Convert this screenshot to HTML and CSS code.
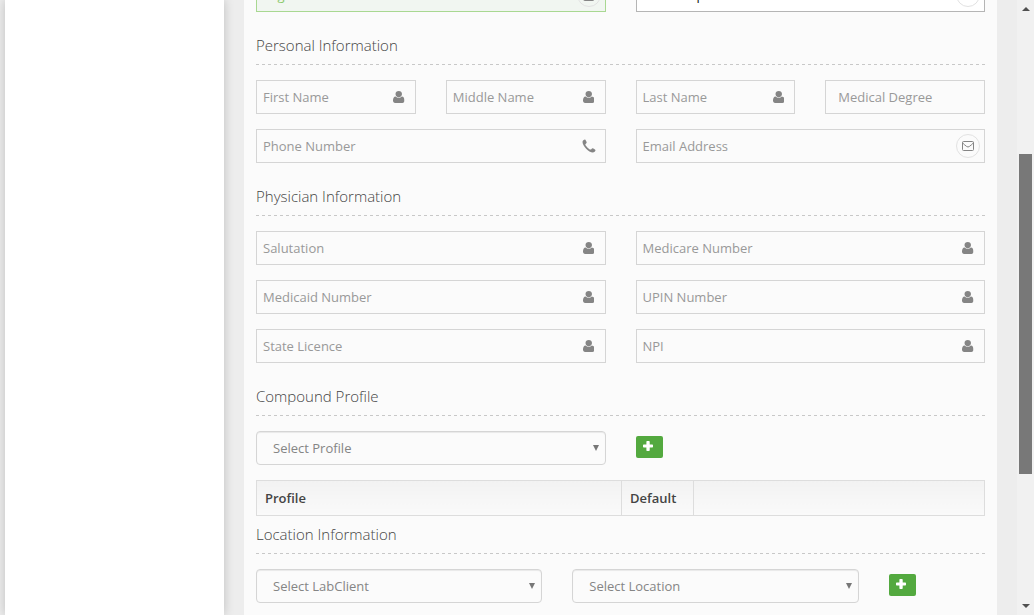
FILE: index.html
```
<!DOCTYPE html>
<html lang="en">
<head>
<meta charset="utf-8">
<title>Physician</title>
<link rel="stylesheet" href="styles.css">
</head>
<body>
<svg class="defs" aria-hidden="true">
  <symbol id="user" viewBox="0 0 11 12" preserveAspectRatio="none"><path d="M5.5 0C7.3 0 8.6 1.3 8.6 3.1S7.3 6.3 5.5 6.3 2.4 4.9 2.4 3.1 3.7 0 5.5 0ZM2.6 5.4C3.3 6.2 4.3 6.700 5.5 6.700S7.700 6.200 8.400 5.400C10.300 5.500 11 7.200 11 9.600 11 11.100 10.200 12 9 12H2C.8 12 0 11.100 0 9.600 0 7.200.7 5.500 2.600 5.400Z"/></symbol>
  <symbol id="phone" viewBox="0 0 14 14"><path d="M.5 3C.5 1.700 1.900.5 3 .5 3.500.5 4.100 2.100 4.700 3.300 5 4.200 3.300 4.700 3.300 5.500 3.300 6.500 7.200 10.600 8.500 10.600 9.300 10.600 9.800 9.100 10.600 9.200 11.300 9.400 13.500 10.600 13.500 11 13.500 12.300 12.100 13.500 10.800 13.500 6.800 13.500.5 7 .5 3Z"/></symbol>
  <symbol id="mail" viewBox="0 0 12 10"><path d="M1.500.5H10.500Q11.500.5 11.500 1.500V8.500Q11.500 9.500 10.500 9.500H1.500Q.5 9.500.5 8.500V1.500Q.5.5 1.500.5ZM.7 1.500Q1 2.600 2.200 3.500L4.700 5.500Q6 6.500 7.300 5.500L9.800 3.500Q11 2.600 11.300 1.500" fill="none" stroke="currentColor"/></symbol>
  <symbol id="plus" viewBox="0 0 10 10"><path d="M4 0H6Q6.700 0 6.700.7V3.500H9.300Q10 3.500 10 4.200V5.800Q10 6.500 9.300 6.500H6.700V9.300Q6.700 10 6 10H4Q3.400 10 3.400 9.300V6.500H.7Q0 6.500 0 5.800V4.200Q0 3.500.7 3.500H3.400V.7Q3.400 0 4 0Z"/></symbol>
</svg>
<div class="page">
  <aside class="sidebar"></aside>
  <main class="panel">
    <div class="row halves row-top">
      <div class="field valid"><span>Login</span><i class="round"><svg class="user"><use href="#user"/></svg></i></div>
      <div class="field filled"><span>Bootstrap</span><i class="round"></i></div>
    </div>

    <h3 class="title">Personal Information</h3>
    <div class="row quarters">
      <div class="field"><span>First Name</span><svg class="user"><use href="#user"/></svg></div>
      <div class="field"><span>Middle Name</span><svg class="user"><use href="#user"/></svg></div>
      <div class="field"><span>Last Name</span><svg class="user"><use href="#user"/></svg></div>
      <div class="field indent"><span>Medical Degree</span></div>
    </div>
    <div class="row halves">
      <div class="field"><span>Phone Number</span><svg class="phone"><use href="#phone"/></svg></div>
      <div class="field"><span>Email Address</span><i class="round"><svg class="mail"><use href="#mail"/></svg></i></div>
    </div>

    <h3 class="title">Physician Information</h3>
    <div class="row halves">
      <div class="field"><span>Salutation</span><svg class="user"><use href="#user"/></svg></div>
      <div class="field"><span>Medicare Number</span><svg class="user"><use href="#user"/></svg></div>
      <div class="field"><span>Medicaid Number</span><svg class="user"><use href="#user"/></svg></div>
      <div class="field"><span>UPIN Number</span><svg class="user"><use href="#user"/></svg></div>
      <div class="field"><span>State Licence</span><svg class="user"><use href="#user"/></svg></div>
      <div class="field"><span>NPI</span><svg class="user"><use href="#user"/></svg></div>
    </div>

    <h3 class="title">Compound Profile</h3>
    <div class="row halves">
      <div class="select"><span>Select Profile</span><b class="caret"></b></div>
      <button class="add" aria-label="Add"><svg><use href="#plus"/></svg></button>
    </div>

    <table class="table">
      <tr><th class="col-profile">Profile</th><th class="col-default">Default</th><th></th></tr>
    </table>

    <h3 class="title tight">Location Information</h3>
    <div class="row location">
      <div class="select"><span>Select LabClient</span><b class="caret"></b></div>
      <div class="select"><span>Select Location</span><b class="caret"></b></div>
      <button class="add" aria-label="Add"><svg><use href="#plus"/></svg></button>
    </div>
  </main>
  <div class="scrollbar"><b class="up"></b><div class="thumb"></div><b class="down"></b></div>
</div>
</body>
</html>
```
FILE: styles.css
```
* { box-sizing: border-box; }
body {
  margin: 0;
  height: 615px;
  overflow: hidden;
  background: #ededed;
  color: #444;
  font: 13px/20px "Open Sans", "Noto Sans", sans-serif;
}
.defs { display: none; }
.page { display: flex; height: 615px; overflow: hidden; }
.sidebar {
  width: 219px;
  margin: 0 20px 0 5px;
  background: #fff;
  box-shadow: 0 0 10px rgba(0, 0, 0, .2);
}
.panel {
  width: 753px;
  height: 615px;
  padding: 0 12px;
  overflow: hidden;
  background: #fbfbfb;
}
.row { display: grid; column-gap: 30px; row-gap: 15px; }
.row + .row { margin-top: 15px; }
.row-top { margin-top: -22px; }
.halves { grid-template-columns: repeat(2, 349.5px); }
.quarters { grid-template-columns: repeat(4, 159.75px); }
.location { grid-template-columns: 286.25px 286.25px 66px; }

.title {
  height: 53px;
  margin: 0 0 15px;
  padding-top: 23px;
  font-size: 15px;
  font-weight: 300;
  line-height: 20px;
  background: repeating-linear-gradient(90deg, #c8c8c8 0 3px, transparent 3px 6px) 0 100% / 100% 1px no-repeat;
}
.title.tight { height: 38px; padding-top: 8px; }

.field, .select {
  display: flex;
  align-items: center;
  justify-content: space-between;
  height: 34px;
  border: 1px solid #d5d5d5;
}
.field { padding: 0 10.25px 0 6px; color: #999; }
.field.indent { padding-left: 12px; }
.field.valid { color: #8bc96a; background: #f1f6f1; border-color: #a9d892; }
.field.filled { padding-left: 8px; color: #111; background: #fff; border-color: #b5b5b5; }
.field svg { flex: none; color: #858585; fill: #858585; }
.user { width: 11.5px; height: 12px; margin-top: -1px; }
.phone { width: 14px; height: 14px; margin-right: -1.5px; }
.mail { width: 12px; height: 10px; }
.round {
  display: flex;
  align-items: center;
  justify-content: center;
  flex: none;
  width: 24px;
  height: 24px;
  margin-right: -6.25px;
  border: 1px solid #e2e2e2;
  border-radius: 50%;
}
.select {
  padding: 0 6px 0 16px;
  border-radius: 4px;
  color: #858585;
  box-shadow: inset 0 1px 1px rgba(0, 0, 0, .075);
}
.caret {
  margin-top: -1px;
  border: 3px solid transparent;
  border-top: 6px solid #777;
  border-bottom: 0;
}
.add {
  display: flex;
  align-items: flex-start;
  width: 27px;
  height: 22px;
  margin: 5px 0 0;
  padding: 5px 0 0 7px;
  border: 0;
  border-radius: 2px;
  background: #53a93f;
}
.add svg { width: 10px; height: 10px; fill: #fff; }

.table {
  width: 729px;
  height: 36px;
  margin-top: 15px;
  border-collapse: collapse;
  table-layout: fixed;
  background: linear-gradient(#f2f2f2, #fafafa);
}
.table th {
  padding: 0 8px;
  border: 1px solid #ddd;
  text-align: left;
  font-weight: 600;
}
.col-profile { width: 365px; }
.col-default { width: 72px; }

.scrollbar {
  display: flex;
  flex-direction: column;
  align-items: center;
  width: 17px;
  margin-left: 20px;
  background: #f1f1f1;
}
.thumb { width: 13px; height: 320px; margin-top: 143px; background: #787878; }
.up, .down { border: 4px solid transparent; }
.up { margin-top: 7px; border-top: 0; border-bottom-color: #505050; }
.down { margin: auto 0 7px; border-bottom: 0; border-top-color: #505050; }
```
